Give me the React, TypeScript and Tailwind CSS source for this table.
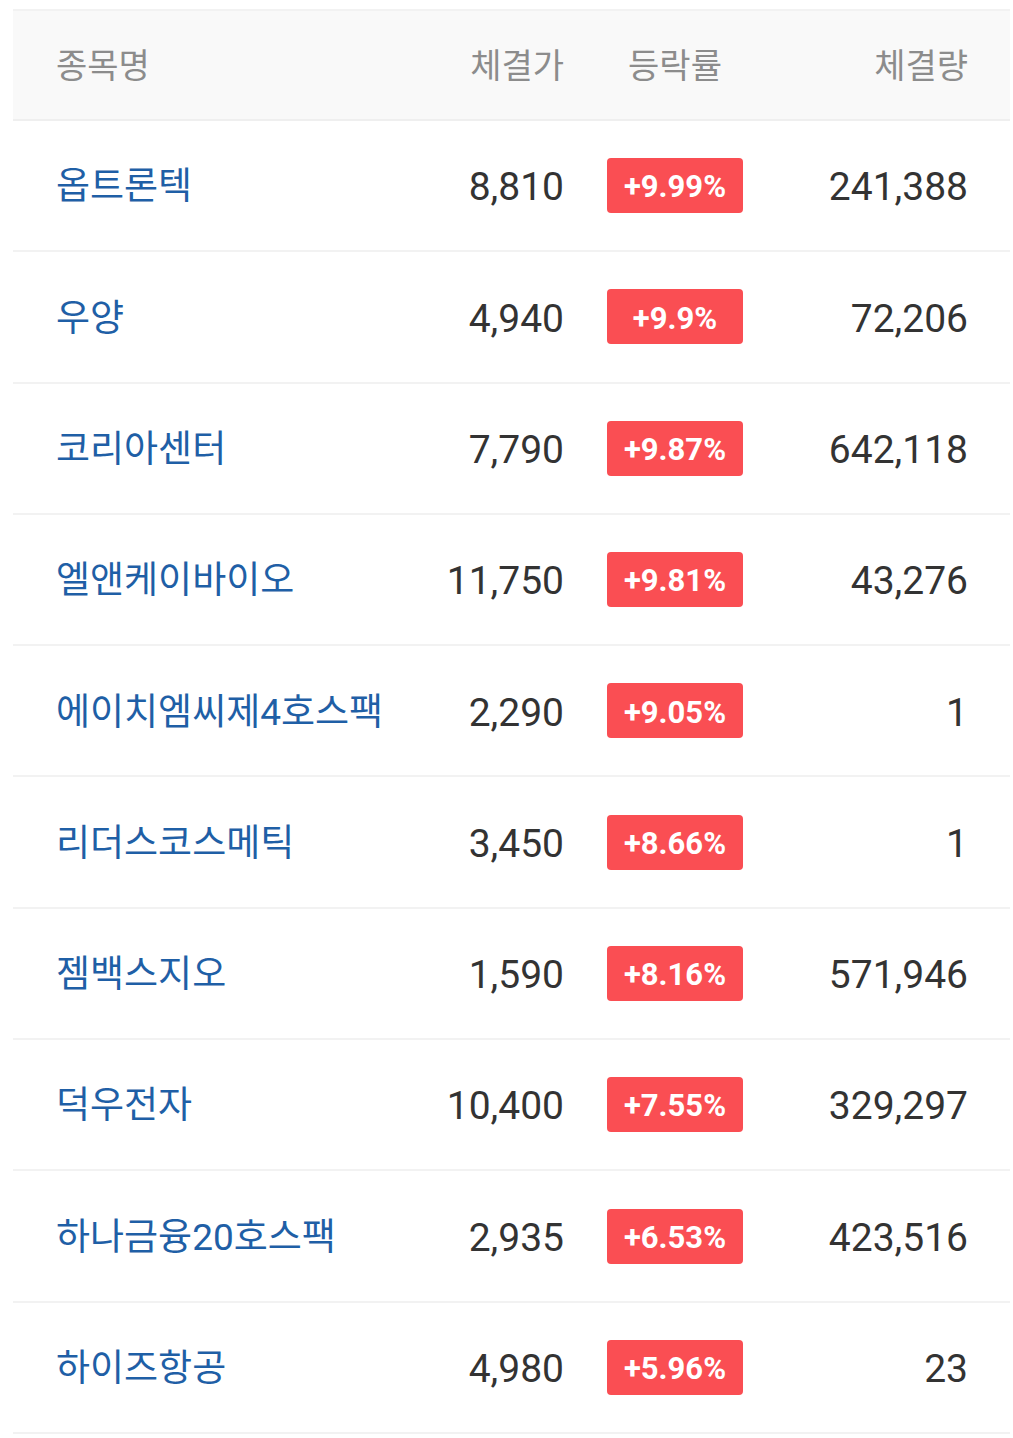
const stocks = [
  { name: '옵트론텍', price: '8,810', rate: '+9.99%', volume: '241,388' },
  { name: '우양', price: '4,940', rate: '+9.9%', volume: '72,206' },
  { name: '코리아센터', price: '7,790', rate: '+9.87%', volume: '642,118' },
  { name: '엘앤케이바이오', price: '11,750', rate: '+9.81%', volume: '43,276' },
  { name: '에이치엠씨제4호스팩', price: '2,290', rate: '+9.05%', volume: '1' },
  { name: '리더스코스메틱', price: '3,450', rate: '+8.66%', volume: '1' },
  { name: '젬백스지오', price: '1,590', rate: '+8.16%', volume: '571,946' },
  { name: '덕우전자', price: '10,400', rate: '+7.55%', volume: '329,297' },
  { name: '하나금융20호스팩', price: '2,935', rate: '+6.53%', volume: '423,516' },
  { name: '하이즈항공', price: '4,980', rate: '+5.96%', volume: '23' },
];

const font = "font-['Roboto','Noto_Sans_CJK_KR',sans-serif]";

export default function App() {
  return (
    <div className={`min-h-[1438px] bg-white pt-[9px] pl-[13px] pr-[3px] ${font}`}>
      <div className="border-t-2 border-[#f2f2f2]">
        <div className="flex h-[110px] items-center border-b-2 border-[#efefef] bg-[#f9f9f9] pl-[43px] pr-[42px] pt-[3px] text-[34px] text-[#8c8c8c]">
          <div className="flex-1">종목명</div>
          <div className="w-[151px] text-right">체결가</div>
          <div className="ml-[43px] w-[136px] text-center">등락률</div>
          <div className="w-[225px] text-right">체결량</div>
        </div>
        {stocks.map((s) => (
          <div
            key={s.name}
            className="flex h-[131.3px] items-center border-b-2 border-[#f2f2f2] pl-[43px] pr-[42px]"
          >
            <div className="flex-1 pt-[3px] text-[37px] text-[#1f5fa6]">{s.name}</div>
            <div className="w-[151px] pt-[4px] text-right text-[39px] text-[#333]">{s.price}</div>
            <div className="ml-[43px] w-[136px]">
              <div className="flex h-[55px] items-center justify-center rounded-[4px] bg-[#fa4e53] pt-[4px] text-[31px] font-bold text-white">
                {s.rate}
              </div>
            </div>
            <div className="w-[225px] pt-[4px] text-right text-[39px] text-[#333]">{s.volume}</div>
          </div>
        ))}
      </div>
    </div>
  );
}
